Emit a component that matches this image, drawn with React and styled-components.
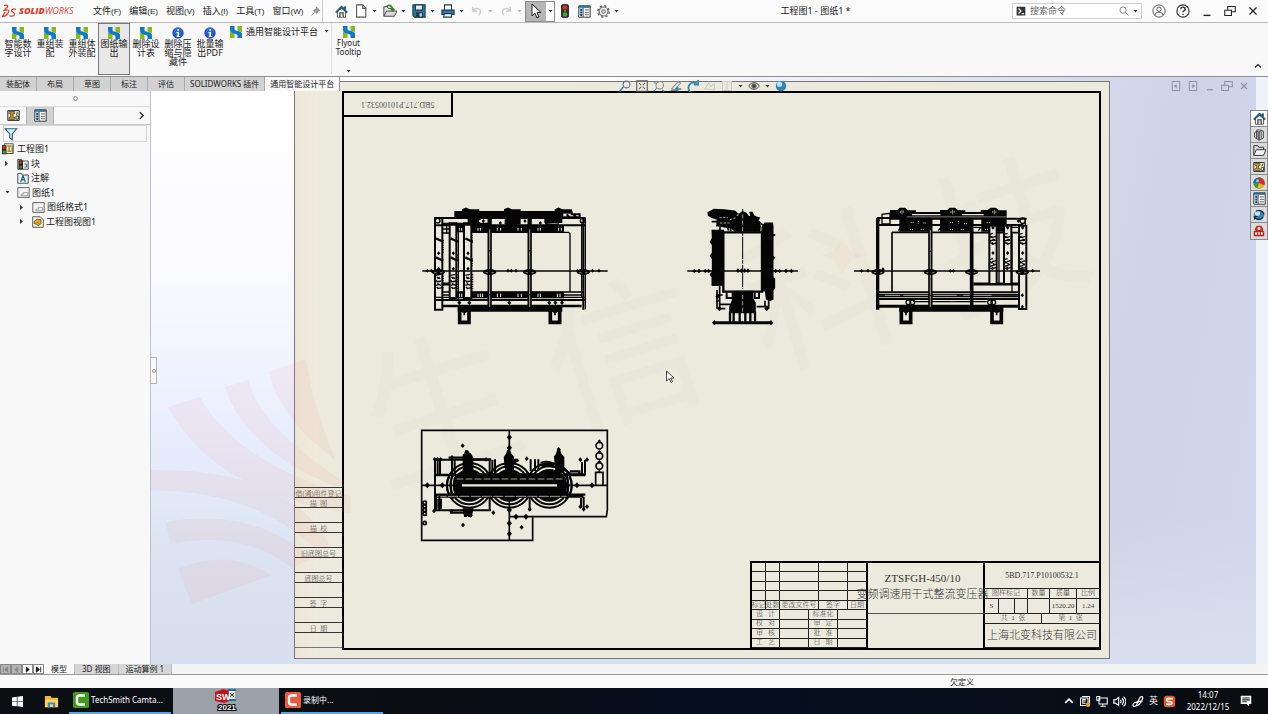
import React from 'react';
import styled, { createGlobalStyle } from 'styled-components';

const GlobalStyle = createGlobalStyle`
  * { box-sizing: border-box; }
  body {
    margin: 0;
    background: #f8f8f8;
    color: #222;
    font-family: 'Noto Sans', 'Noto Sans CJK SC', sans-serif;
    font-size: 9px;
    line-height: 12px;
  }
  button {
    border: 0;
    padding: 0;
    background: none;
    color: inherit;
    font: inherit;
  }
  svg { display: block; flex: none; }
  ul { list-style: none; margin: 0; padding: 0; }
`;

const Page = styled.div`
  min-height: 100vh;
  display: flex;
  flex-direction: column;
`;

/* ---------- title bar ---------- */
const TitleBar = styled.header`
  height: 23px;
  display: flex;
  align-items: center;
  border-bottom: 1px solid #b9b9b9;
  background: #fbfbfb;
`;
const Brand = styled.div`
  display: flex;
  align-items: center;
  width: 93px;
  padding-left: 2px;
  gap: 2px;
  color: #d6402f;
  font-family: 'Open Sans', sans-serif;
  font-size: 9px;
  font-style: italic;
  b { font-weight: 800; }
`;
const Menu = styled.nav`
  display: flex;
  align-items: center;
  width: 230px;
  height: 22px;
  gap: 8px;
  border-right: 1px solid #ccc;
`;
const MenuItem = styled.button`
  white-space: nowrap;
  small {
    font-family: 'Liberation Sans', sans-serif;
    font-size: 8px;
  }
`;
const QuickTools = styled.div`
  display: flex;
  align-items: center;
  gap: 6px;
  padding-left: ${(p) => p.$inset}px;
`;
const ToolButton = styled.button`
  display: flex;
  align-items: center;
  gap: 4px;
  opacity: ${(p) => (p.$dim ? 0.35 : 1)};
`;
const SelectTool = styled.div`
  display: flex;
  height: 21px;
  margin: 0 3px;
  border: 1px solid #8d8d8d;
`;
const SelectPart = styled.button`
  display: flex;
  align-items: center;
  justify-content: center;
  width: ${(p) => (p.$main ? 20 : 8)}px;
  background: ${(p) => (p.$main ? '#b6b6b6' : '#fff')};
`;
const DocTitle = styled.h1`
  flex: 1;
  margin: 0;
  text-align: center;
  font-size: 9px;
  font-weight: 400;
`;
const Search = styled.label`
  display: flex;
  align-items: center;
  gap: 4px;
  width: 130px;
  height: 16px;
  padding: 0 3px;
  border: 1px solid #cfcfcf;
  background: #fff;
`;
const SearchInput = styled.input`
  flex: 1;
  min-width: 0;
  border: 0;
  padding: 0;
  outline: 0;
  background: none;
  font: inherit;
  &::placeholder { color: #666; opacity: 1; }
`;
const WindowButtons = styled.div`
  display: flex;
  align-items: center;
  gap: 10px;
  padding: 0 8px 0 10px;
`;

/* ---------- ribbon ---------- */
const Ribbon = styled.div`
  height: 54px;
  display: flex;
  align-items: flex-start;
  padding-left: 2px;
  border-bottom: 1px solid #8e8e8e;
  background: #f8f8f8;
`;
const RibbonButton = styled.button`
  display: flex;
  flex-direction: column;
  align-items: center;
  width: ${(p) => p.$width || 32}px;
  height: 52px;
  padding-top: 3px;
  line-height: 9px;
  border: 1px solid ${(p) => (p.$active ? '#777' : 'transparent')};
  background: ${(p) => (p.$active ? '#e8e8e8' : 'none')};
`;
const RibbonText = styled.span`
  width: ${(p) => (p.$wide ? 32 : 27)}px;
  word-break: ${(p) => (p.$wide ? 'normal' : 'break-all')};
  font-size: ${(p) => (p.$wide ? 8 : 9)}px;
  flex: 1;
`;
const PlatformMenu = styled.button`
  display: flex;
  align-items: center;
  gap: 4px;
  width: 105px;
  height: 17px;
  padding-left: 4px;
  white-space: nowrap;
  svg:last-child { margin-left: 2px; }
`;
const RibbonEnd = styled.div`
  display: flex;
  height: 51px;
  border-left: 1px solid #ddd;
  flex: 1;
  justify-content: space-between;
  align-items: flex-end;
`;
const Collapse = styled.button`
  padding: 0 6px 4px;
`;

/* ---------- workspace ---------- */
const Workspace = styled.main`
  flex: 1;
  display: grid;
  grid-template-columns: 151px minmax(0, 1fr);
  grid-template-rows: 14px 1fr;
`;
const Tabs = styled.div`
  grid-area: 1 / 1 / 2 / 3;
  justify-self: start;
  display: flex;
  z-index: 2;
  border-right: 1px solid #8e8e8e;
`;
const Tab = styled.button`
  min-width: 37px;
  padding: 0 5px;
  font-size: 8px;
  line-height: 14px;
  white-space: nowrap;
  background: ${(p) => (p.$active ? '#f8f8f8' : '#d2d2d2')};
  border-right: ${(p) => (p.$active ? 0 : '1px solid #aaa')};
`;
const Sidebar = styled.aside`
  grid-area: 2 / 1 / 3 / 2;
  position: relative;
  border-right: 1px solid #bfc3c9;
  background: #f8f8f8;
`;
const Grip = styled.div`
  display: flex;
  height: 16px;
  align-items: center;
  justify-content: center;
  border-bottom: 1px solid #ddd;
`;
const PanelTabs = styled.div`
  display: flex;
  height: 18px;
  border-bottom: 1px solid #c9c9c9;
`;
const PanelTab = styled.button`
  display: flex;
  align-items: center;
  justify-content: center;
  width: 27px;
  border-right: 1px solid #b0b0b0;
  background: ${(p) => (p.$active ? '#f8f8f8' : '#d2d2d2')};
`;
const PanelMore = styled.button`
  margin-left: auto;
  padding-right: 4px;
`;
const Filter = styled.label`
  display: flex;
  align-items: center;
  height: 17px;
  margin: 0 3px;
  border: 1px solid #d4d4d4;
`;
const Tree = styled.ul`
  display: grid;
  grid-auto-rows: 1fr;
  height: 87px;
`;
const TreeRow = styled.li`
  display: flex;
  align-items: center;
  gap: ${(p) => (p.$depth ? 2 : 3)}px;
  padding-left: ${(p) => (p.$depth ? p.$depth * 15 - 12 : 2)}px;
`;
const Expander = styled.button`
  width: 8px;
  height: 10px;
  margin-right: 4px;
  display: flex;
  align-items: center;
  justify-content: center;
`;
const SideHandle = styled.button`
  position: absolute;
  left: 150px;
  top: 266px;
  z-index: 2;
  width: 7px;
  height: 27px;
  border: 1px solid #b5b5b5;
  background: #fafafa;
  display: flex;
  align-items: center;
  justify-content: center;
`;

/* ---------- graphics area ---------- */
const Viewport = styled.section`
  grid-area: 1 / 2 / 3 / 3;
  position: relative;
  display: flex;
  overflow: hidden;
  padding: 4px 158px 5px 143px;
  background:
    linear-gradient(180deg, rgba(216,222,237,0) 75%, #d8dfee 100%),
    linear-gradient(100deg, rgba(205,212,231,0) 35%, #cdd4e7 85%, #d2d8ea 100%),
    linear-gradient(180deg, #fff 0%, #fbfbff 32%, #e9eeff 60%, #dee6f5 78%, #d8deed 100%);
`;
const RightStrip = styled.div`
  position: absolute;
  right: 0;
  top: 0;
  bottom: 0;
  width: 12px;
  background: #eff1f9;
`;
const Paper = styled.div`
  flex: 1;
  display: flex;
  border: 1px solid #777;
  padding: 9px 8px 8px 0;
  background: linear-gradient(90deg, #ede7d9 0, #eeeadd 23px, #ebeadd 24px);
`;
const MarginColumn = styled.div`
  width: 47px;
  display: flex;
  flex-direction: column;
  justify-content: flex-end;
  padding-bottom: 3px;
`;
const MarginCell = styled.div`
  height: ${(p) => (p.$tall ? 15 : 10)}px;
  border-top: 1px solid #333;
  font-size: 7px;
  line-height: 12px;
  font-weight: 300;
  color: #333;
  text-align: center;
  white-space: pre;
  &:last-child { box-shadow: 0 1px #777; }
`;
const SheetFrame = styled.div`
  position: relative;
  flex: 1;
  display: flex;
  flex-direction: column;
  justify-content: space-between;
  border: 2px solid #000;
`;
const NumberTag = styled.div`
  width: 109px;
  height: 24px;
  border: solid #000;
  border-width: 0 2px 2px 0;
  display: flex;
  align-items: center;
  justify-content: center;
  font-family: 'Liberation Serif', serif;
  font-size: 8px;
  color: #555;
  span { transform: rotate(180deg); }
`;
const View = styled.svg`
  position: absolute;
  left: ${(p) => p.$x}px;
  top: ${(p) => p.$y}px;
`;
const Overlay = styled.svg`
  position: absolute;
  left: 0;
  top: 0;
  pointer-events: none;
`;

const TitleBlock = styled.div`
  align-self: flex-end;
  display: grid;
  grid-template-columns: 116px 117px 114px;
  height: 87px;
  border: solid #000;
  border-width: 2px 0 0 2px;
  font-family: 'Liberation Serif', 'Noto Sans CJK SC', serif;
  font-weight: 300;
  font-size: 7px;
  line-height: 9px;
  color: #333;
`;
const Revisions = styled.div`
  display: grid;
  grid-template-rows: 5fr 4fr;
  border-right: 2px solid #000;
  min-height: 0;
`;
const CellGrid = styled.div`
  display: grid;
  grid-template-columns: ${(p) => p.$cols};
  grid-auto-rows: minmax(0, 1fr);
  min-height: 0;
`;
const Cell = styled.div`
  display: flex;
  align-items: center;
  justify-content: center;
  min-width: 0;
  min-height: 0;
  white-space: pre;
  border: solid #222;
  border-width: 0 1px 1px 0;
  &:nth-child(${(p) => p.$last || 'n+99'}) { border-right: 0; }
`;
const ProductColumn = styled.div`
  display: grid;
  grid-template-columns: minmax(0, 1fr);
  grid-template-rows: 51px 1fr;
  border-right: 2px solid #000;
`;
const Product = styled.div`
  display: flex;
  flex-direction: column;
  align-items: center;
  gap: 4px;
  padding: 9px 6px 0 0;
  border-bottom: 1px solid #555;
  font-size: 11px;
  line-height: 12px;
  white-space: nowrap;
`;
const InfoColumn = styled.div`
  display: grid;
  grid-template-rows: 26px 10px 15px 10px 1fr;
`;
const InfoRow = styled.div`
  display: grid;
  grid-template-columns: ${(p) => p.$cols || '1fr'};
  font-size: ${(p) => p.$size || 7}px;
  line-height: 9px;
`;

const HeadsUp = styled.div`
  position: absolute;
  top: 3px;
  left: 0;
  right: 14px;
  display: flex;
  align-items: center;
  justify-content: center;
  gap: 5px;
`;
const DocButtons = styled.div`
  position: absolute;
  top: 3px;
  right: 18px;
  display: flex;
  gap: 5px;
  color: #8b909c;
`;
const TaskPane = styled.div`
  position: absolute;
  top: 33px;
  right: 0;
  width: 18px;
  border: 1px solid #888;
`;
const PaneButton = styled.button`
  display: flex;
  align-items: center;
  justify-content: center;
  width: 16px;
  height: 16px;
  border-bottom: 1px solid #888;
  background: ${(p) => (p.$active ? '#fff' : '#dcdcdc')};
  &:last-child { border-bottom: 0; }
`;

/* ---------- bottom ---------- */
const SheetTabs = styled.div`
  display: flex;
  height: 11px;
  background: #f4f4f4;
  border-bottom: 1px solid #9a9a9a;
`;
const NavButton = styled.button`
  display: flex;
  align-items: center;
  justify-content: center;
  width: 11px;
  border: 1px solid #888;
  background: ${(p) => (p.$off ? '#b4b4b4' : '#fff')};
  color: ${(p) => (p.$off ? '#888' : '#111')};
`;
const SheetTab = styled.button`
  padding: 0 7px;
  font-size: 8px;
  line-height: 10px;
  background: ${(p) => (p.$active ? '#fafafa' : '#d6d6d6')};
  border-right: 1px solid #bbb;
`;
const Status = styled.div`
  height: 13px;
  padding-right: 294px;
  text-align: right;
  line-height: 13px;
  font-size: 8px;
  background: #fafafa;
`;
const Taskbar = styled.footer`
  display: flex;
  align-items: center;
  height: 26px;
  color: #fff;
  background: linear-gradient(90deg, #0c0f14, #0a0d12 35%, #030d1e 55%, #06101d 75%, #090b0e);
`;
const TaskIcon = styled.button`
  display: flex;
  justify-content: center;
  width: 34px;
`;
const TaskButton = styled.button`
  display: flex;
  align-items: center;
  justify-content: ${(p) => (p.$center ? 'center' : 'flex-start')};
  gap: 2px;
  width: ${(p) => (p.$center ? 106 : 102)}px;
  height: 26px;
  margin: 0 1px;
  padding-left: ${(p) => (p.$center ? 0 : 4)}px;
  border-bottom: 2px solid ${(p) => (p.$center ? '#9ba1a8' : '#5ba3e6')};
  background: ${(p) => (p.$center ? '#9ba1a8' : 'none')};
  font-size: 8px;
  white-space: nowrap;
`;
const Tray = styled.div`
  display: flex;
  align-items: center;
  gap: 5px;
  margin-left: auto;
  padding-right: 16px;
`;
const Clock = styled.time`
  width: 54px;
  text-align: center;
  font-size: 8px;
  line-height: 12px;
`;

/* ---------- icons ---------- */
const Icon = ({ size = 12, children, ...rest }) => (
  <svg width={size} height={size} viewBox="0 0 16 16" fill="none" stroke="currentColor" strokeWidth="1.4" aria-hidden="true" {...rest}>
    {children}
  </svg>
);
const Caret = () => (
  <svg width="5" height="3" viewBox="0 0 5 3" aria-hidden="true"><path d="M0.5 0h4L2.5 2.6z" fill="#333" /></svg>
);
const PlatformIcon = () => (
  <Icon stroke="none">
    <path d="M10 0h6v8c-2 0-3-1-6-2z" fill="#8cb81c" />
    <path d="M0 8c2 0 3 1 6 2v6H0z" fill="#8cb81c" />
    <path d="M0 0h6v4c0 2 3 2 6 3s4 2 4 4v5h-6v-3c0-2-2-2-5-3s-5-2-5-5z" fill="#0e7bc4" />
  </Icon>
);
const InfoIcon = () => (
  <Icon stroke="none">
    <circle cx="8" cy="8" r="7.6" fill="#1c54c4" />
    <circle cx="8" cy="6" r="5" fill="#3c7bea" opacity=".6" />
    <path d="M7 3h2.4v2H7zM6 6.5h3.4V12H11v1.4H6V12h1.2V8H6z" fill="#fff" />
  </Icon>
);
const HomeIcon = ({ size = 13 }) => (
  <Icon size={size} stroke="none">
    <path d="M3 8v7h10V8L8 3.500z" fill="#fff" stroke="#333" strokeWidth="1" />
    <path d="M8 1L0.500 8.500l1.200 1.200L8 4l6.300 5.700 1.200-1.200L13 6V2h-2v2z" fill="#17638a" stroke="#123" strokeWidth=".5" />
    <path d="M6 15V9.500h4V15" stroke="#333" fill="#d7e3ec" />
  </Icon>
);
const NewIcon = () => (
  <Icon size={14} stroke="#555" strokeWidth="1.2"><path d="M3 1h7l3.500 3.500V15H3z" fill="#fff" /><path d="M10 1v4h4" /></Icon>
);
const OpenIcon = () => (
  <Icon size={14} stroke="#444" strokeWidth="1.1">
    <path d="M1 14V3h4l1 2h6v3" fill="#eee" /><path d="M1 14L4 8h12l-3 6z" fill="#d8d8d8" />
    <path d="M4 3c3-3 6-1 7 3" stroke="#338a1b" strokeWidth="2" /><path d="M8 5.500h6l-3 4z" fill="#338a1b" stroke="none" />
  </Icon>
);
const SaveIcon = () => (
  <Icon size={14} stroke="#173b52" strokeWidth="1.2">
    <path d="M1 1h14v14H3l-2-2z" fill="#2f7ba5" /><path d="M4 1h8v6H4z" fill="#e9eef2" /><path d="M5 10h7v5H5z" fill="#ccc" /><path d="M6 11h2v3H6z" fill="#222" />
  </Icon>
);
const PrintIcon = () => (
  <Icon size={14} stroke="#173b52" strokeWidth="1.2">
    <path d="M4 7V1h8v6" fill="#fff" /><path d="M1 7h14v5H1z" fill="#2f7ba5" /><path d="M4 11h8v4H3z" fill="#fff" />
  </Icon>
);
const UndoIcon = ({ flip }) => (
  <Icon size={14} stroke="#777" strokeWidth="1.600" transform={flip ? 'scale(-1 1)' : undefined}>
    <path d="M3 3v5h5M3 7.500c4-4 9-2.500 9 1.500 0 2-1 3-2 4" />
  </Icon>
);
const ArrowIcon = ({ size = 16 }) => (
  <Icon size={size} stroke="#222" strokeWidth="1"><path d="M4 1v12l3-2.800L9 15l2-1-2-4.500h4z" fill="#fff" /></Icon>
);
const TrafficIcon = ({ size = 14 }) => (
  <Icon size={size} stroke="#222" strokeWidth="1">
    <rect x="4" y="0.500" width="8" height="15" rx="2" fill="#333" />
    <circle cx="8" cy="4" r="2.700" fill="#d23420" stroke="none" /><circle cx="8" cy="8" r="1.300" fill="#7b6b20" stroke="none" /><circle cx="8" cy="12" r="2.700" fill="#3aa732" stroke="none" />
  </Icon>
);
const ListIcon = ({ size = 13 }) => (
  <Icon size={size} stroke="none">
    <path d="M1 1h14v14H1z" fill="#fff" stroke="#333" strokeWidth="1.200" /><path d="M1 1h14v2.500H1z" fill="#2b7199" />
    <path d="M1.500 3.500H6.500V14.500H1.500z" fill="#9fbccd" /><path d="M6.500 3.500V15" stroke="#444" strokeWidth=".8" />
    <path d="M8.500 6h5M8.500 9h5M8.500 12h5" stroke="#444" strokeWidth="1" />
    <path d="M3 5h2v2H3zM3 8.200h2v2H3zM3 11.400h2v2H3z" fill="#123f5c" />
  </Icon>
);
const GearIcon = () => (
  <Icon size={13} stroke="#666">
    <circle cx="8" cy="8" r="5.500" /><circle cx="8" cy="8" r="2.200" />
    <circle cx="8" cy="8" r="7" strokeDasharray="2.750 2.750" strokeWidth="1.800" />
  </Icon>
);
const DrawingIcon = ({ size = 12 }) => (
  <Icon size={size} stroke="#222" strokeWidth="1.200">
    <path d="M1 2h14v12H1z" fill="#fdf6d8" /><path d="M3 4.500h6M3 11.500h6" stroke="#c89a12" strokeWidth="2.400" /><path d="M6 5v6" stroke="#c89a12" strokeWidth="3" />
    <path d="M2.500 3.200h7v2.600h-2v4.400h2v2.600h-7v-2.600h2V5.800h-2z" strokeWidth=".8" />
    <path d="M12.500 3.500v3h-1.500M11 8.500h3v4h-3z" strokeWidth="1" />
  </Icon>
);
const FolderIcon = ({ size = 13 }) => (
  <Icon size={size} stroke="#333" strokeWidth="1.200"><path d="M1 14V2h5l1 2h6v3" fill="#ddd" /><path d="M1 14l3-7h12l-3 7z" fill="#f5f5f5" /></Icon>
);
const BlockIcon = () => (
  <Icon stroke="#444" strokeWidth="1.200">
    <path d="M1 2h5l1 2h8v11H1z" fill="#eee" /><path d="M2 3h6v12H2z" fill="#222" stroke="none" />
    <circle cx="5" cy="6" r="2" fill="#c82a1c" stroke="none" /><circle cx="5" cy="12" r="2" fill="#348a2b" stroke="none" /><path d="M10 8h3v4h-3" />
  </Icon>
);
// root node: the drawing icon with a rebuild light on its left edge
const RootIcon = () => (
  <Icon stroke="#222" strokeWidth="1">
    <path d="M3 1h12v13H3z" fill="#fdf6d8" /><path d="M7 4h5M7 11h5M9.500 4v7" stroke="#b98c0c" strokeWidth="2" /><path d="M13.500 3v10" />
    <path d="M0 3h6v12H0z" fill="#222" stroke="none" /><circle cx="3" cy="6" r="2.200" fill="#d23420" stroke="none" /><circle cx="3" cy="12" r="2.200" fill="#3aa732" stroke="none" />
  </Icon>
);
const NoteIcon = () => (
  <Icon stroke="#444" strokeWidth="1.200">
    <path d="M1 2h5l1 2h8v11H1z" fill="#eee" /><path d="M5 13l3-8 3 8M6 10.500h4" stroke="#17638a" strokeWidth="1.600" />
  </Icon>
);
const SheetIcon = () => (
  <Icon size={13} stroke="#555" strokeWidth="1.100"><path d="M1 2h14v12H1z" fill="#f4f4f4" /><path d="M8 8h5v4H5v-2h3z" stroke="#999" /></Icon>
);
const ViewIcon = () => (
  <Icon size={12} stroke="#333" strokeWidth="1.100">
    <path d="M1 1h10l4 4v10H1z" fill="#fff" /><path d="M3 7l4-3 5 1v5l-3 3-3-2-3-1z" fill="#e2a919" stroke="#6a4800" /><path d="M7 8l2 2" stroke="#6a4800" />
  </Icon>
);
const FilterIcon = () => (
  <Icon size={14} stroke="#24617f" strokeWidth="1.300"><path d="M1.500 2h13L9.500 8v6.500l-3-2V8z" fill="#d9edf6" /></Icon>
);
const Chevron = ({ d = 'M5 2l6 6-6 6', size = 9 }) => <Icon size={size} strokeWidth="2.400"><path d={d} /></Icon>;
const MinIcon = ({ size = 12 }) => <Icon size={size}><path d="M4 13h8" strokeWidth="1.600" /></Icon>;
const RestoreIcon = ({ size = 12 }) => <Icon size={size}><path d="M1 7h9v7H1zM5 7V2h10v7h-5" /></Icon>;
const CloseIcon = ({ size = 12 }) => <Icon size={size} strokeWidth="1.500"><path d="M4 4l8 8M12 4l-8 8" /></Icon>;
const BallIcon = () => (
  <Icon stroke="none">
    <circle cx="8" cy="8" r="7.500" fill="#3d9b36" /><path d="M8 8V.5A7.500 7.500 0 0 0 .5 8z" fill="#2166be" /><path d="M8 8V.5A7.500 7.500 0 0 1 15 11z" fill="#d92f22" /><path d="M8 8l7 3a7.500 7.500 0 0 1-9 4z" fill="#f1b51c" />
    <circle cx="6" cy="5" r="2" fill="#fff" opacity=".6" />
  </Icon>
);
const GlobeIcon = ({ arrows }) => (
  <Icon stroke="none">
    <circle cx="8" cy="8" r="7" fill="#3484b4" /><circle cx="6" cy="5.500" r="3.500" fill="#bfe3f5" />
    {arrows && <path d="M1 10c3 5 9 5 12 1M15 7C13 2 8 1 4 3M2 14v-4h4" stroke="#123" strokeWidth="1.600" />}
  </Icon>
);
const LibraryIcon = () => (
  <Icon stroke="#333" strokeWidth="1"><path d="M2 5l3-2v10l-3-2zM5 3l3 1v11l-3-2zM8 4l3-2 3 1v9l-6 3z" fill="#ccc" /><path d="M11 3v10M4 2l4-1 4 1" /></Icon>
);
const ForumIcon = () => (
  <Icon stroke="none">
    <path d="M2 6l3-5h6l3 5-2 3H4z" fill="#c82a1c" /><circle cx="8" cy="4.500" r="2" fill="#fff" />
    <path d="M1 8h14v7H1z" fill="#b32318" /><path d="M3 9.500h2.500V13H3zM7 9.500h2V13H7zM10.500 9.500H13V13h-2.500z" fill="#fff" />
  </Icon>
);
const UserIcon = () => <Icon size={14} stroke="#555" strokeWidth="1.100"><circle cx="8" cy="8" r="7" /><circle cx="8" cy="6" r="2.500" /><path d="M3.500 13c0-5 9-5 9 0" /></Icon>;
const HelpIcon = () => <Icon size={14} stroke="#333" strokeWidth="1.300"><circle cx="8" cy="8" r="7" /><path d="M5.500 6c0-3.500 5-3 5 0 0 1.500-2.500 1.700-2.500 3.500M8 11v1.500" strokeWidth="1.600" /></Icon>;
const MagnifierIcon = () => <Icon size={10} stroke="#777"><circle cx="6.500" cy="6.500" r="5" /><path d="M10 10l5 5" /></Icon>;
const BracketIcon = ({ right }) => (
  <Icon strokeWidth="1.300"><path d="M3 2h10v12H3z" /><path d={right ? 'M7 5.500l4 2.500-4 2.500z' : 'M9 5.500L5 8l4 2.500z'} fill="currentColor" stroke="none" /></Icon>
);

/* ---------- drawing views ---------- */
const INK = '#050505';
const PAPER = '#ebeadd';

const Dots = ({ points, r = 5 }) => points.map(([x, y]) => (
  <path key={`${x}-${y}`} d={`M${x - r} ${y}L${x} ${y - r - 1}L${x + r} ${y}L${x} ${y + r + 1}z`} fill={INK} stroke="none" />
));
// ragged column of hatching marks
const Ragged = ({ x, y, count, w = 14 }) => {
  let d = '';
  for (let i = 0; i < count; i += 1) {
    d += `M${x + (i % 3) * 2} ${y + i * 5}l${w - (i % 4) * 3} ${i % 2 ? 5 : -3}`;
  }
  return <path d={d} strokeWidth="4" />;
};
// light chips left open in the dark coil bands
const Chips = ({ xs, y, h = 8 }) => (
  <path d={xs.map((x) => `M${x} ${y}v${h}`).join('')} stroke={PAPER} strokeWidth="3" />
);
const Post = ({ x, y1, y2 }) => (
  <g><path d={`M${x} ${y1}V${y2}`} strokeWidth="13" /><path d={`M${x} ${y1 + 35}V${y2}`} stroke={PAPER} strokeWidth="2" strokeDasharray="62 4" /></g>
);
const Foot = ({ x }) => (
  <g><path d={`M${x - 14} 345h28v37h-28z`} strokeWidth="11" /><path d={`M${x - 6} 351h12M${x} 352v9`} strokeWidth="5" /></g>
);
const Clamp = ({ x }) => (
  <g><ellipse cx={x} cy="231" rx="20" ry="9" fill={INK} stroke="none" /><path d={`M${x - 12} 233h6M${x + 6} 233h6`} stroke={PAPER} strokeWidth="2" /></g>
);

const FrontView = () => (
  <View $x={66} $y={102} width="210" height="140" viewBox="0 0 630 420" fill="none" stroke={INK} strokeWidth="4">
    <path d="M135 50H458V68H135z" fill={INK} />
    <path d="M158 52v-8l10-4 12 5h26v9M284 52v-8l10-4 12 5h24v9M436 52v-8l10-4 12 5h26v9z" fill={INK} />
    <path d="M455 52h30v6h24v12M460 67h50M470 58l8 8M490 58l8 8" strokeWidth="6" />
    <path d="M72 69h454M75 91h450" strokeWidth="6" />
    <path d="M140 92h320v18H140z" fill={INK} /><path d="M175 72h30v9h-30zM286 66h44v20h-44zM405 66h50v16h-50z" fill={INK} />
    <Ragged x={182} y={76} count={4} w={30} /><Ragged x={285} y={70} count={6} w={40} /><Ragged x={405} y={70} count={6} w={40} />
    <Dots points={[[271, 84], [391, 84], [345, 78], [220, 78]]} />
    <Chips xs={[148, 155, 204, 211, 262, 272, 324, 334, 384, 391, 446, 454]} y={99} />
    <path d="M185 112H476l4 5V290M97 102h20M97 114h20" />
    <path d="M140 292h320v16H140z" fill={INK} /><path d="M97 291H520M97 300H515M75 307H525" />
    <Chips xs={[148, 155, 204, 211, 218, 262, 272, 324, 334, 384, 391, 442, 450]} y={296} h={10} />
    <path d="M73 315H526" strokeWidth="6" /><path d="M97 333H515" strokeWidth="8" />
    <path d="M145 332h310v16H145z" fill={INK} />
    <path d="M75 69h22v275H75zM520 69v275" strokeWidth="6" /><path d="M515 85v225M526 68v275" />
    <path d="M119 85h20v224h-20zM162 85h22v224h-22z" fill={PAPER} strokeWidth="6" />
    <path d="M98 267h22M97 88h142" strokeWidth="9" />
    <circle cx="83" cy="77" r="7" /><circle cx="517" cy="77" r="6" /><path d="M119 88h60M110 92v24M145 92v220" />
    {[78, 122, 166].map((x) => (
      <g key={x}>
        <path d={`M${x} 130l10 5 12 5M${x} 187l10 5 12 5`} strokeWidth="7" />
        <Ragged x={x} y={241} count={9} />
        <Dots points={[[x + 8, 175], [x + 8, 221]]} />
      </g>
    ))}
    <path d="M99 135v40M142 180v20M186 120v28M186 190v24M99 235v50M142 238v50M188 238v50" strokeDasharray="3 4" />
    <Post x={239} y1={68} y2={336} /><Post x={359} y1={68} y2={336} />
    <path d="M37 228H593" strokeWidth="5" />
    <Dots points={[[52, 227], [64, 227], [294, 227], [304, 227], [318, 227], [502, 227], [510, 227], [548, 227], [567, 227]]} />
    <Clamp x={85} /><Clamp x={239} /><Clamp x={359} /><Clamp x={520} />
    <Dots points={[[148, 323], [178, 323], [298, 323], [418, 323], [436, 323], [456, 323]]} r={6} />
    <Foot x={163} /><Foot x={435} />
  </View>
);

const SideView = () => (
  <View $x={336} $y={102} width="130" height="140" viewBox="0 0 390 420" fill="none" stroke={INK} strokeWidth="5">
    <path d="M85 53l17-9 30 1 32 4 8 7-7 6 10 4 3-8 10-7 10 4 7 10 9 2-3-14 5 0 5 10 8 4 8 2-5 9 7 5 1 13-4 12H165l-10-10-23-3-20-6-1-10 5-6-20-6-10-6z" fill={INK} />
    <path d="M115 80h-20M108 92h32l6 15M120 95v13M235 78l22 20M239 95v15M225 95v15M152 98v10" strokeWidth="5" />
    <path d="M118 68h26M150 74l18-6M120 84h30" stroke={PAPER} strokeWidth="2" strokeDasharray="7 4" />
    <path d="M97 107h33v163H97v-24l-5-7 6-10v-38l-6-9 6-8v-25l-6-8 6-12z" fill={INK} />
    <path d="M247 97l8-12h22l1 8v24l5 3-5 4v60l5 4-5 5v55l5 4v28l-5 4v28l-8 4-10-4-3-25h-10z" fill={INK} />
    <path d="M130 112h116v178H130z" fill={PAPER} strokeWidth="7" />
    <path d="M97 270h22v70M108 300h20M108 322l12-8M111 285v56M118 328h34M116 341h20M230 335h35M255 317v20M266 307v34" />
    <path d="M140 292v17h18V292M224 292v17h13V292" strokeWidth="6" />
    <path d="M163 290h54v20l8 14v28h-75v-15l7-19z" fill={INK} />
    <path d="M150 350v30M161 352v28M179 352v28M196 352v28M211 352v28M225 350v30" strokeWidth="7" />
    <path d="M102 383H273" strokeWidth="9" />
    <Dots points={[[103, 383], [273, 383], [113, 304], [118, 341], [260, 341]]} r={7} />
    <path d="M188 42v240" strokeWidth="3" strokeDasharray="66 4 10 4" /><path d="M188 58v50M188 300v50" stroke={PAPER} strokeWidth="2" strokeDasharray="12 7" />
    <path d="M22 228H354" strokeWidth="5" />
    <Dots points={[[43, 228], [57, 228], [76, 228], [86, 228], [174, 227], [184, 227], [194, 227], [204, 227], [287, 228], [299, 228], [318, 228], [334, 228]]} r={6} />
  </View>
);

const RearView = () => (
  <View $x={506} $y={102} width="200" height="140" viewBox="0 0 600 420" fill="none" stroke={INK} strokeWidth="4">
    <path d="M122 47h20l8-7h14l10 8h22v5h76v-6h20l8-7h14l10 8h20v5h50v-6h20l8-7h14l10 8h22v21H122z" fill={INK} />
    <path d="M186 59h85M336 59h65" stroke={PAPER} strokeWidth="4" /><path d="M170 66H470" stroke={PAPER} strokeWidth="2" />
    {[156, 308, 433].map((x) => <g key={x}><circle cx={x} cy="51" r="10" fill={INK} /><path d={`M${x - 5} 48v6M${x + 5} 47v6M${x} 44v14`} stroke={PAPER} strokeWidth="2" /></g>)}
    <path d="M96 86V58l24-3v32z" /><path d="M80 69h40M118 71h412M80 90H520" strokeWidth="6" />
    <path d="M150 70h88v38h-88zM272 70h92v38h-92zM396 70h72v38h-72z" fill={INK} />
    <path d="M182 83h12M205 78v8M220 84h8M300 83h12M325 78v8M342 86h10M410 83h12M180 103h10M212 103h12M300 103h12M332 103h12M405 103h12" stroke={PAPER} strokeWidth="3" strokeDasharray="3 3" />
    <path d="M145 107l8-10h70l8 10M265 107l8-10h70l8 10M385 107l8-10h70l8 10M370 97h160" />
    <path d="M126 112H370M126 112v178M370 113h160" strokeWidth="5" />
    <path d="M85 292H524M85 304h430M85 312H530" strokeWidth="6" /><path d="M85 299h430M190 320h220" strokeWidth="4" /><path d="M105 301h45M160 301h75M250 301h70M340 301h85M300 317h20" stroke={PAPER} strokeWidth="2" />
    <path d="M85 334h425" strokeWidth="9" /><path d="M150 333h308v15H150z" fill={INK} />
    <path d="M83 69v275" strokeWidth="10" /><path d="M526 69v240" />
    <path d="M370 267h158" strokeWidth="9" />
    {[418, 462, 507].map((x) => (
      <g key={x}>
        <path d={`M${x} 92h22v${x === 507 ? 250 : 175}h-22z`} fill={PAPER} strokeWidth="6" />
        <Ragged x={x - 1} y={118} count={6} w={12} /><Ragged x={x + 8} y={127} count={5} w={12} />
        <Ragged x={x - 1} y={194} count={6} w={12} /><Ragged x={x + 8} y={200} count={5} w={12} />
        <Dots points={[[x + 11, 174], [x + 11, 98]]} />
      </g>
    ))}
    <path d="M447 90v175M486 115v175" />
    <circle cx="518" cy="77" r="8" /><Dots points={[[86, 76], [505, 78], [517, 301], [517, 335]]} />
    <Post x={241} y1={70} y2={336} /><path d="M365 70V336" strokeWidth="11" />
    <path d="M12 228H570" strokeWidth="5" />
    <Dots points={[[35, 227], [54, 227], [99, 223], [301, 227], [310, 227], [548, 227]]} />
    <Clamp x={84} /><Clamp x={241} /><Clamp x={365} /><Clamp x={517} />
    {[175, 187, 420, 430].map((x) => <circle key={x} cx={x} cy="322" r="7" />)}
    <Foot x={168} /><Foot x={440} />
  </View>
);

const PlanView = () => (
  <View $x={66} $y={327} width="210" height="130" viewBox="0 0 630 390" fill="none" stroke={INK} strokeWidth="4">
    <path d="M35 31H592V270l-3 20H368V361H35z" strokeWidth="5" /><path d="M298 31V361M298 290h70M35 196H592" strokeWidth="5" />
    {[178, 298, 418].map((x) => (
      <g key={x}>
        <circle cx={x} cy="196" r="67" strokeWidth="6" /><circle cx={x} cy="196" r="57" strokeWidth="6" /><circle cx={x} cy="196" r="47" fill={INK} />
      </g>
    ))}
    <path d="M145 162h310c18 12 20 58 0 68H145c-20-12-20-58 0-68z" fill={INK} />
    <path d="M118 170c-10 15-10 40 0 54M478 170c10 15 10 40 0 54M130 160c-10 18-10 55 0 76M467 160c10 18 10 55 0 76" strokeWidth="6" />
    <path d="M75 165h451M75 224h451M75 230h445" strokeWidth="7" />
    <path d="M140 177H465" stroke={PAPER} strokeWidth="2" strokeDasharray="20 7" /><path d="M156 196H441" stroke={PAPER} strokeWidth="7" />
    <path d="M80 229H470" stroke={PAPER} strokeWidth="2" strokeDasharray="30 4" />
    <path d="M75 120v150M83 120v45M90 120v45M78 224v48M88 228v42M72 119h168M75 271h168M126 120v42M134 120v42M239 230v40" strokeWidth="6" />
    <path d="M239 119v43M247 119v43M85 236v30M93 236v30M255 118v40M362 118v35M375 118v35M385 118v35M525 120v46M516 126v36M359 230v42M521 230v40M513 234v28" strokeWidth="6" />
    <path d="M160 105l5-4 2-8h6l3 6 5 2 7 12v40h-28zM283 112l7-10 3-10h6l3 10 8 8v8l14 4-14 8v19h-23zM434 110l6-8 3-12h6l3 12 9 10v45h-23zM160 267h28l-4 22h-8l-3-8-3 8h-6z" fill={INK} />
    <path d="M116 113h45M188 118h55M120 278h65M480 154h28v12M476 163h45M460 145l20 15M305 120h20M388 135h45" strokeWidth="7" />
    <path d="M392 128c20-8 30 0 40 2M395 142c16-6 26-4 36 0" strokeWidth="5" />
    <Dots points={[[298, 52], [298, 83], [298, 310], [298, 341], [52, 196], [97, 196], [501, 196], [546, 196], [318, 290], [348, 290], [298, 270]]} r={8} />
    <Dots points={[[158, 77], [159, 315], [335, 322], [74, 118], [82, 118], [92, 118], [126, 112], [228, 118], [350, 116], [511, 119], [531, 119], [72, 273], [124, 274], [182, 286], [250, 278], [359, 268], [521, 268], [511, 260], [531, 260], [446, 88], [170, 98]]} r={6} />
    {[77, 108, 138].map((y) => <g key={y}><circle cx="568" cy={y} r="10" strokeWidth="5" /><Dots points={[[568, y - 13]]} /></g>)}
    <path d="M557 196v-39h22v39M568 151v6" strokeWidth="5" />
    {[248, 259, 270, 281, 309].map((y) => <circle key={y} cx="44" cy={y} r="5" strokeWidth="5" />)}
    <path d="M49 242v50" strokeDasharray="5 5" />
  </View>
);

/* ---------- data ---------- */
const menus = [['文件', 'F'], ['编辑', 'E'], ['视图', 'V'], ['插入', 'I'], ['工具', 'T'], ['窗口', 'W']];
const commands = [
  { text: '智能数字设计' }, { text: '重组装配' }, { text: '重组体外装配' }, { text: '图纸输出', active: true },
  { text: '删除设计表' }, { text: '删除压缩与隐藏件', info: true }, { text: '批量输出PDF', info: true },
];
const tabs = ['装配体', '布局', '草图', '标注', '评估', 'SOLIDWORKS 插件', '通用智能设计平台'];
const tree = [
  { label: '工程图1', depth: 0, icon: <RootIcon /> },
  { label: '块', depth: 1, icon: <BlockIcon />, toggle: 'closed' },
  { label: '注解', depth: 1, icon: <NoteIcon /> },
  { label: '图纸1', depth: 1, icon: <SheetIcon />, toggle: 'open' },
  { label: '图纸格式1', depth: 2, icon: <SheetIcon />, toggle: 'closed' },
  { label: '工程图视图1', depth: 2, icon: <ViewIcon />, toggle: 'closed' },
];
const marginLabels = ['描  图', '描  校', '旧底图总号', '底图总号', '签  字', '日  期'];
const revisionCells = [...Array(20).fill(''), '标记', '处数', '更改文件号', '签字', '日期'];
const signCells = ['设   计', '', '标准化', '', '校   对', '', '审   定', '', '审   核', '', '批   准', '', '工   艺', '', '日   期', ''];

const Header = () => (
  <TitleBar>
    <Brand>
      <svg width="15" height="14" viewBox="0 0 30 28" fill="none" stroke="#d6402f" strokeWidth="2.500" aria-hidden="true">
        <path d="M4 3c7-2 9 1 6 4L5 11M2 14c8-3 13-3 11 2-2 6-7 9-12 9l5-9" />
        <path d="M28 11c-4-2-9-1-9 2s6 3 6 7-6 6-10 3" />
      </svg>
      <span><b>SOLID</b>WORKS</span>
    </Brand>
    <Menu>
      {menus.map(([name, key]) => <MenuItem key={key}>{name}<small>({key})</small></MenuItem>)}
      <Icon size={10} stroke="#888"><path d="M9 2l5 5-3 1-2 4-5-5 4-2zM6 10l-5 5" fill="#999" /></Icon>
    </Menu>
    <QuickTools $inset={12}>
      <ToolButton aria-label="主页"><HomeIcon /></ToolButton>
      <ToolButton aria-label="新建"><NewIcon /><Caret /></ToolButton>
      <ToolButton aria-label="打开"><OpenIcon /><Caret /></ToolButton>
      <ToolButton aria-label="保存"><SaveIcon /><Caret /></ToolButton>
      <ToolButton aria-label="打印"><PrintIcon /><Caret /></ToolButton>
      <ToolButton aria-label="撤消" $dim><UndoIcon /><Caret /></ToolButton>
      <ToolButton aria-label="重做" $dim><UndoIcon flip /><Caret /></ToolButton>
    </QuickTools>
    <SelectTool>
      <SelectPart $main aria-label="选择"><ArrowIcon /></SelectPart>
      <SelectPart aria-label="选择选项"><Caret /></SelectPart>
    </SelectTool>
    <QuickTools $inset={0}>
      <ToolButton aria-label="重建"><TrafficIcon /></ToolButton>
      <ToolButton aria-label="文件属性"><ListIcon /></ToolButton>
      <ToolButton aria-label="选项"><GearIcon /><Caret /></ToolButton>
    </QuickTools>
    <DocTitle>工程图1 - 图纸1 *</DocTitle>
    <Search>
      <Icon size={10} stroke="#fff" strokeWidth="2"><path d="M0 0h16v16H0z" fill="#333" /><path d="M4 4l4 4-4 4M9 12h4" /></Icon>
      <SearchInput placeholder="搜索命令" aria-label="搜索命令" />
      <MagnifierIcon />
      <Caret />
    </Search>
    <WindowButtons>
      <ToolButton aria-label="登录"><UserIcon /></ToolButton>
      <ToolButton aria-label="帮助"><HelpIcon /></ToolButton>
      <ToolButton aria-label="最小化"><MinIcon size={14} /></ToolButton>
      <ToolButton aria-label="还原"><RestoreIcon /></ToolButton>
      <ToolButton aria-label="关闭"><CloseIcon size={14} /></ToolButton>
    </WindowButtons>
  </TitleBar>
);

const FeaturePanel = () => (
  <Sidebar>
    <Grip><Icon size={5} stroke="#777" strokeWidth="3"><circle cx="8" cy="8" r="6" /></Icon></Grip>
    <PanelTabs>
      <PanelTab $active aria-label="设计树"><DrawingIcon size={13} /></PanelTab>
      <PanelTab aria-label="属性"><ListIcon /></PanelTab>
      <PanelMore aria-label="更多"><Chevron /></PanelMore>
    </PanelTabs>
    <Filter><FilterIcon /><SearchInput aria-label="过滤" /></Filter>
    <Tree>
      {tree.map((node) => (
        <TreeRow key={node.label} $depth={node.depth}>
          {node.depth > 0 && (
            <Expander aria-label={node.label}>
              {node.toggle === 'closed' && <svg width="4" height="5" viewBox="0 0 4 5"><path d="M0 0v5l3-2.500z" fill="#333" /></svg>}
              {node.toggle === 'open' && <Caret />}
            </Expander>
          )}
          {node.icon}
          <span>{node.label}</span>
        </TreeRow>
      ))}
    </Tree>
    <SideHandle aria-label="收起"><Icon size={4} stroke="#777" strokeWidth="3"><circle cx="8" cy="8" r="6" /></Icon></SideHandle>
  </Sidebar>
);

const SheetTitle = () => (
  <TitleBlock>
    <Revisions>
      <CellGrid $cols="14px 14px 39px 29px 1fr">
        {revisionCells.map((text, i) => <Cell key={i} $last="5n">{text}</Cell>)}
      </CellGrid>
      <CellGrid $cols="28px 29px 29px 1fr">
        {signCells.map((text, i) => <Cell key={i} $last="4n">{text}</Cell>)}
      </CellGrid>
    </Revisions>
    <ProductColumn>
      <Product><span>ZTSFGH-450/10</span><span>变频调速用干式整流变压器</span></Product>
    </ProductColumn>
    <InfoColumn>
      <InfoRow $size={8}><Cell $last="1">5BD.717.P10100532.1</Cell></InfoRow>
      <InfoRow $cols="43px 22px 27px 1fr">
        <Cell>图样标记</Cell><Cell>数量</Cell><Cell>质量</Cell><Cell $last="4">比例</Cell>
      </InfoRow>
      <InfoRow $cols="14px 16px 13px 22px 27px 1fr">
        <Cell>S</Cell><Cell /><Cell /><Cell /><Cell>1520.20</Cell><Cell $last="6">1.24</Cell>
      </InfoRow>
      <InfoRow $cols="57px 1fr"><Cell>共  1  张</Cell><Cell $last="2">第  1  张</Cell></InfoRow>
      <InfoRow $size={11}><Cell $last="1">上海北变科技有限公司</Cell></InfoRow>
    </InfoColumn>
  </TitleBlock>
);

const Watermark = () => (
  <Overlay width="1117" height="587" viewBox="151 77 1117 587" aria-hidden="true">
    <g fill="#f08a78">
      <path opacity=".09" d="M268 372l38-13c6 40 18 72 29 100-35-25-57-53-67-87zM225 387l24-7c5 30 40 66 94 101l-3 7c-55-20-101-55-115-101zM168 407l32-10c25 45 75 76 151 100l-1 16c-90-13-150-48-182-106zM151 470c90-2 155 25 180 78l-14 2c-45-42-98-59-166-60zM165 522c58-10 108 2 147 36l-20 10c-35-27-75-33-121-24zM178 569c36-15 64-11 94 6l-80 29z" />
      <path opacity=".06" d="M842 238l8 13 13 4-13 6-8 13-7-13-13-6 13-4z" />
    </g>
    <g fill="#000" opacity=".013" fontSize="155" fontWeight="400" fontFamily="'Noto Sans CJK SC', sans-serif">
      {[['生', 383, 485], ['信', 565, 430], ['科', 765, 368], ['技', 950, 312]].map(([c, x, y]) => (
        <text key={c} x={x} y={y} transform={`rotate(-17 ${x} ${y})`}>{c}</text>
      ))}
    </g>
    <g transform="translate(665 370)"><path d="M1.500 1v10l2.700-2.500L6 12.500l1.500-.8L5.800 8H9z" fill="#fff" stroke="#333" strokeWidth=".9" /></g>
  </Overlay>
);

const ViewTools = () => (
  <HeadsUp>
    <Icon stroke="#666"><circle cx="10" cy="6" r="4.500" fill="#eef" /><path d="M6 9l-5 6" stroke="#3787b3" strokeWidth="2" /></Icon>
    <Icon stroke="#555"><path d="M1 1h14v14H1zM4 4l3 3M12 4L9 7M4 12l3-3M12 12L9 9" /></Icon>
    <Icon stroke="#888"><circle cx="9" cy="7" r="5" /><path d="M5 11l-4 4M1 4h3M12 13l3 2" stroke="#3787b3" /></Icon>
    <Icon stroke="#888"><path d="M2 12l9-10 3 2-8 9zM1 14h8" /><path d="M15 12H8l3-3M8 12l3 3" stroke="#3787b3" strokeWidth="2" /></Icon>
    <Icon stroke="#2f86b8" strokeWidth="2.400"><path d="M4 16C-1 9 4 1 13 4M15 0v6H9" /></Icon>
    <Icon stroke="#ccc"><path d="M1 12l5-8 3 5 5-4v8z" /></Icon>
    <Icon stroke="#ccc"><path d="M2 2h12v12H2zM8 2v12" /></Icon>
    <Caret />
    <Icon stroke="#777"><path d="M1 8c4-6 10-6 14 0-4 6-10 6-14 0z" fill="#fff" /><circle cx="8" cy="8" r="3" fill="#444" /></Icon>
    <Caret />
    <GlobeIcon />
  </HeadsUp>
);

const Graphics = () => (
  <Viewport>
    <RightStrip />
    <Paper>
      <MarginColumn>
        <MarginCell>借(通)用件登记</MarginCell>
        {marginLabels.map((text) => (
          <React.Fragment key={text}><MarginCell>{text}</MarginCell><MarginCell $tall /></React.Fragment>
        ))}
      </MarginColumn>
      <SheetFrame>
        <NumberTag><span>5BD.717.P10100532.1</span></NumberTag>
        <FrontView />
        <SideView />
        <RearView />
        <PlanView />
        <SheetTitle />
      </SheetFrame>
    </Paper>
    <Watermark />
    <ViewTools />
    <DocButtons>
      <BracketIcon /><BracketIcon right /><MinIcon /><RestoreIcon /><CloseIcon />
    </DocButtons>
    <TaskPane>
      <PaneButton $active aria-label="资源"><HomeIcon /></PaneButton>
      <PaneButton aria-label="设计库"><LibraryIcon /></PaneButton>
      <PaneButton aria-label="文件探索器"><FolderIcon /></PaneButton>
      <PaneButton aria-label="视图调色板"><DrawingIcon /></PaneButton>
      <PaneButton aria-label="外观"><BallIcon /></PaneButton>
      <PaneButton aria-label="自定义属性"><ListIcon /></PaneButton>
      <PaneButton aria-label="更新"><GlobeIcon arrows /></PaneButton>
      <PaneButton aria-label="论坛"><ForumIcon /></PaneButton>
    </TaskPane>
  </Viewport>
);

const CamtasiaIcon = ({ color }) => (
  <Icon size={16} stroke="#fff" strokeWidth="2.400"><rect width="16" height="16" rx="1.500" fill={color} stroke="none" /><path d="M12 3.500H6.500Q4 3.500 4 6v4q0 2.500 2.500 2.500H12" /></Icon>
);

const Bottom = () => (
  <>
    <SheetTabs>
      <NavButton $off aria-label="第一张"><Icon size={7} strokeWidth="2"><path d="M3 2v12M13 2L6 8l7 6z" fill="currentColor" /></Icon></NavButton>
      <NavButton $off aria-label="上一张"><Icon size={7}><path d="M11 2L4 8l7 6z" fill="currentColor" /></Icon></NavButton>
      <NavButton aria-label="下一张"><Icon size={7}><path d="M5 2l7 6-7 6z" fill="currentColor" /></Icon></NavButton>
      <NavButton aria-label="最后一张"><Icon size={7} strokeWidth="2"><path d="M13 2v12M3 2l7 6-7 6z" fill="currentColor" /></Icon></NavButton>
      <SheetTab $active>模型</SheetTab>
      <SheetTab>3D 视图</SheetTab>
      <SheetTab>运动算例 1</SheetTab>
    </SheetTabs>
    <Status>欠定义</Status>
    <Taskbar>
      <TaskIcon aria-label="开始"><Icon size={11} stroke="none"><path d="M0 2l7-1v6.500H0zM8 1l8-1v7.500H8zM0 8.500h7V15l-7-1zM8 8.500h8V16l-8-1z" fill="#fff" /></Icon></TaskIcon>
      <TaskIcon aria-label="资源管理器"><Icon size={15} stroke="none"><path d="M1 2h6l1 2h7v10H1z" fill="#f0b73a" /><path d="M1 6h14v8H1z" fill="#fbd463" /><path d="M4 14V9h8v5h-2.500v-3h-3v3z" fill="#368fc9" /></Icon></TaskIcon>
      <TaskButton><CamtasiaIcon color="#3d9a1c" />TechSmith Camta...</TaskButton>
      <TaskButton $center aria-label="SOLIDWORKS 2021">
        <svg width="24" height="24" viewBox="0 0 24 24" aria-hidden="true">
          <path d="M1 4l8-3 7 2v10l-6 2-9-2z" fill="#c5161d" /><path d="M14 1h8v2h-6v8h6v2h-8z" fill="#217397" /><path d="M15 3h6v8h-6z" fill="#eee" /><path d="M16 5l4 4M20 5l-4 4M16 7h4" stroke="#444" />
          <text x="2" y="12" fontSize="9" fontWeight="700" fill="#fff" fontFamily="Liberation Sans, sans-serif">SW</text>
          <text x="4" y="22" fontSize="8" fontWeight="700" fill="#fff" stroke="#000" strokeWidth="2" paintOrder="stroke" fontFamily="Liberation Sans, sans-serif">2021</text>
        </svg>
      </TaskButton>
      <TaskButton><CamtasiaIcon color="#ea5a3c" />录制中...</TaskButton>
      <Tray>
        <Chevron size={10} d="M2 11l6-6 6 6" />
        <Icon stroke="#fff"><path d="M4 2h10v10M2 4h10v10H2zM9 6H5v5h4M9 8H6" /><circle cx="12" cy="13" r="3" fill="#f39a1e" stroke="none" /></Icon>
        <Icon stroke="#fff"><path d="M4 4h11v8H4zM9 12v2M6 15h7M1 2h4v5H1z" /></Icon>
        <Icon size={13} stroke="#fff"><path d="M1 6v4h2l4 3V3L3 6zM9 6q2 2 0 4M11 4q4 4 0 8M13 2q6 6 0 12" /></Icon>
        <Icon size={13} stroke="#fff"><path d="M7 13c-6 4-6-4-1-4s3-7 7-7c3 0 1 4-1 7s-5 5-5 3 4-6 7-4" /></Icon>
        <span>英</span>
        <Icon size={13} stroke="none"><rect x="1" y="1" width="14" height="14" rx="4" fill="#eb5423" /><path d="M12 4.500H6q-2 0-1.500 2T8 8q3.500 0 3 2t-3 1.500H4" stroke="#fff" strokeWidth="2" /></Icon>
        <Clock>14:07<br />2022/12/15</Clock>
        <Icon size={12} stroke="none"><path d="M1 1h14v11h-3v3l-3-3H1z" fill="#fff" /><path d="M3 4h10M3 6.500h10M3 9h6" stroke="#222" /></Icon>
      </Tray>
    </Taskbar>
  </>
);

export default function App() {
  return (
    <Page>
      <GlobalStyle />
      <Header />
      <Ribbon>
        {commands.map((cmd) => (
          <RibbonButton key={cmd.text} $active={cmd.active}>
            {cmd.info ? <InfoIcon /> : <PlatformIcon />}
            <RibbonText>{cmd.text}</RibbonText>
          </RibbonButton>
        ))}
        <PlatformMenu><PlatformIcon />通用智能设计平台<Caret /></PlatformMenu>
        <RibbonEnd>
          <RibbonButton $width={33}>
            <PlatformIcon /><RibbonText $wide>Flyout Tooltip</RibbonText><Caret />
          </RibbonButton>
          <Collapse aria-label="折叠"><Chevron size={8} d="M2 11l6-6 6 6" /></Collapse>
        </RibbonEnd>
      </Ribbon>
      <Workspace>
        <Tabs>
          {tabs.map((name) => <Tab key={name} $active={name === '通用智能设计平台'}>{name}</Tab>)}
        </Tabs>
        <FeaturePanel />
        <Graphics />
      </Workspace>
      <Bottom />
    </Page>
  );
}
